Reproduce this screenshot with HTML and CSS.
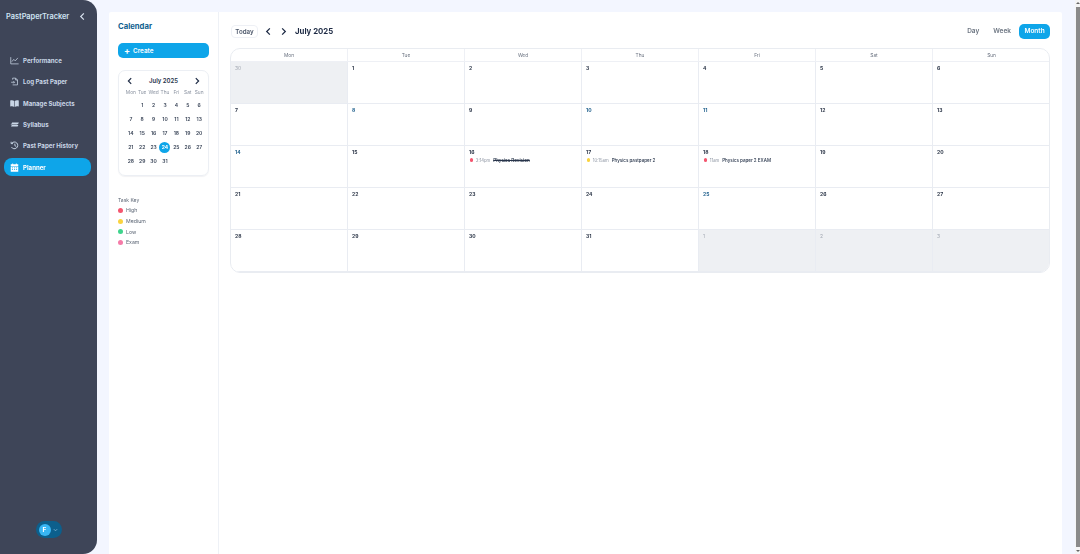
FILE: index.html
```html
<!DOCTYPE html>
<html lang="en">
<head>
<meta charset="utf-8">
<title>PastPaperTracker</title>
<link rel="stylesheet" href="styles.css">
</head>
<body>
<div class="app">
  <aside class="sidebar">
    <div class="brand">
      <span class="brand-name">PastPaperTracker</span>
      <svg class="collapse" viewBox="0 0 10 10"><path d="M6.500 1.500 3 5l3.500 3.500" /></svg>
    </div>
    <nav class="nav">
      <a class="nav-item"><svg class="nav-icon stroke" viewBox="0 0 12 12"><path d="M1 1.500V10.500H11.500M2.500 7.500 5 4.500l2 2L10.500 2.500"/></svg><span>Performance</span></a>
      <a class="nav-item"><svg class="nav-icon stroke" viewBox="0 0 12 12"><path d="M3.500 3.500V1.500H7.500L10 4V10.500H3.500M7.500 1.500V4H10M1.500 7H6M4.500 5.500 6 7 4.500 8.500"/></svg><span>Log Past Paper</span></a>
      <a class="nav-item"><svg class="nav-icon fill" viewBox="0 0 12 12"><path d="M.3 2c2-.6 4-.4 5.300.5V10.500C4.500 9.700 2.500 9.500.3 10ZM11.700 2c-2-.6-4-.4-5.300.5V10.500C7.500 9.700 9.500 9.500 11.700 10Z"/></svg><span>Manage Subjects</span></a>
      <a class="nav-item"><svg class="nav-icon fill" viewBox="0 0 12 12"><path d="M2.800 3.200H11.800L10.800 5.200H1.800ZM.6 6H9.500L11.200 7.200 10 8.800H1.200L2.400 7.200Z"/></svg><span>Syllabus</span></a>
      <a class="nav-item"><svg class="nav-icon stroke thick" viewBox="0 0 12 12"><path d="M2.300 3A4.500 4.500 0 1 1 2 8.200M1.500 1V3.500H4M6.500 3.500V6.200L8.300 7.300"/></svg><span>Past Paper History</span></a>
      <a class="nav-item active"><svg class="nav-icon fill" viewBox="0 0 12 12"><path d="M3 .5H4.200V1.800H7.800V.5H9V1.800H11V4H1V1.800H3ZM1 4.800H11V11.500H1ZM2.500 6V7H4V6ZM5.300 6V7H6.800V6ZM8 6V7H9.500V6ZM2.500 8.300V9.300H4V8.300ZM5.300 8.300V9.300H6.800V8.300ZM8 8.300V9.300H9.500V8.300Z" fill-rule="evenodd"/></svg><span>Planner</span></a>
    </nav>
    <div class="user">
      <div class="user-pill"><span class="avatar">F</span><svg class="user-caret" viewBox="0 0 6 4"><path d="M1 1l2 2 2-2"/></svg></div>
    </div>
  </aside>

  <main class="panel">
    <section class="side">
      <h1 class="side-title">Calendar</h1>
      <button class="create"><span class="plus">+</span>Create</button>
      <div class="mini">
        <div class="mini-head">
          <svg class="chev" viewBox="0 0 10 10"><path d="M6.500 1.500 3 5l3.500 3.500"/></svg>
          <span>July 2025</span>
          <svg class="chev" viewBox="0 0 10 10"><path d="M3.500 1.500 7 5 3.500 8.500"/></svg>
        </div>
        <div class="mini-grid">
          <span class="dow">Mon</span><span class="dow">Tue</span><span class="dow">Wed</span><span class="dow">Thu</span><span class="dow">Fri</span><span class="dow">Sat</span><span class="dow">Sun</span>
          <span></span><span>1</span><span>2</span><span>3</span><span>4</span><span>5</span><span>6</span>
          <span>7</span><span>8</span><span>9</span><span>10</span><span>11</span><span>12</span><span>13</span>
          <span>14</span><span>15</span><span>16</span><span>17</span><span>18</span><span>19</span><span>20</span>
          <span>21</span><span>22</span><span>23</span><span class="today">24</span><span>25</span><span>26</span><span>27</span>
          <span>28</span><span>29</span><span>30</span><span>31</span><span></span><span></span><span></span>
        </div>
      </div>
      <div class="key">
        <div class="key-title">Task Key</div>
        <div class="key-row"><i class="dot high"></i>High</div>
        <div class="key-row"><i class="dot medium"></i>Medium</div>
        <div class="key-row"><i class="dot low"></i>Low</div>
        <div class="key-row"><i class="dot exam"></i>Exam</div>
      </div>
    </section>

    <section class="cal">
      <header class="toolbar">
        <div class="tool-left">
          <button class="today-btn">Today</button>
          <svg class="tool-chev" viewBox="0 0 10 10"><path d="M6.500 1.500 3 5l3.500 3.500"/></svg>
          <svg class="tool-chev" viewBox="0 0 10 10"><path d="M3.500 1.500 7 5 3.500 8.500"/></svg>
          <h2 class="month">July 2025</h2>
        </div>
        <div class="views">
          <button class="view">Day</button>
          <button class="view">Week</button>
          <button class="view on">Month</button>
        </div>
      </header>

      <div class="grid">
        <div class="dh">Mon</div><div class="dh">Tue</div><div class="dh">Wed</div><div class="dh">Thu</div><div class="dh">Fri</div><div class="dh">Sat</div><div class="dh">Sun</div>

        <div class="c off"><b>30</b></div><div class="c"><b>1</b></div><div class="c"><b>2</b></div><div class="c"><b>3</b></div><div class="c"><b>4</b></div><div class="c"><b>5</b></div><div class="c"><b>6</b></div>
        <div class="c"><b>7</b></div><div class="c"><b class="blue">8</b></div><div class="c"><b>9</b></div><div class="c"><b class="blue">10</b></div><div class="c"><b class="blue">11</b></div><div class="c"><b>12</b></div><div class="c"><b>13</b></div>
        <div class="c"><b class="blue">14</b></div><div class="c"><b>15</b></div>
        <div class="c"><b>16</b><div class="ev"><i class="ev-dot high"></i><span class="ev-time">3:14pm</span><span class="ev-name done">Physics Revision</span></div></div>
        <div class="c"><b>17</b><div class="ev"><i class="ev-dot medium"></i><span class="ev-time">10:15am</span><span class="ev-name">Physics pastpaper 2</span></div></div>
        <div class="c"><b>18</b><div class="ev"><i class="ev-dot high"></i><span class="ev-time">11am</span><span class="ev-name">Physics paper 2 EXAM</span></div></div>
        <div class="c"><b>19</b></div><div class="c"><b>20</b></div>
        <div class="c"><b>21</b></div><div class="c"><b>22</b></div><div class="c"><b>23</b></div><div class="c"><b>24</b></div><div class="c"><b class="blue">25</b></div><div class="c"><b>26</b></div><div class="c"><b>27</b></div>
        <div class="c"><b>28</b></div><div class="c"><b>29</b></div><div class="c"><b>30</b></div><div class="c"><b>31</b></div><div class="c off"><b>1</b></div><div class="c off"><b>2</b></div><div class="c off"><b>3</b></div>
      </div>
    </section>
  </main>
</div>
<div class="scrollbar"><span class="arrow up"></span><span class="thumb"></span><span class="arrow down"></span></div>
</body>
</html>
```
FILE: styles.css
```css
* { box-sizing: border-box; }
html, body { margin: 0; height: 100%; overflow: hidden; }
body { background: #f3f6ff; font-family: Inter, "Liberation Sans", sans-serif; color: #1f2a3d; }
button { font-family: inherit; border: 0; padding: 0; background: none; }
svg { display: block; fill: none; stroke: currentColor; }

.app { display: flex; height: 554px; width: 1080px; filter: blur(.3px); }

.sidebar { width: 97px; flex: none; background: #3e4558; border-radius: 0 14px 14px 0; display: flex; flex-direction: column; color: #c9d6e6; }
.brand { height: 33px; padding: 0 10px 0 6px; display: flex; align-items: center; justify-content: space-between; }
.brand-name { font-size: 7.400px; font-weight: 600; color: #cfe3f2; white-space: nowrap; }
.collapse { width: 9px; height: 9px; stroke-width: 1.300; color: #d8e2ee; }
.nav { margin-top: 18.300px; display: flex; flex-direction: column; gap: 3.400px; padding: 0 6px 0 4px; }
.nav-item { height: 18px; display: flex; align-items: center; gap: 4px; padding-left: 6px; border-radius: 8px; font-size: 6.100px; font-weight: 700; white-space: nowrap; }
.nav-item.active { background: #0ea5e9; color: #fff; }
.nav-icon { width: 9px; height: 9px; flex: none; }
.nav-icon.stroke { stroke-width: 1; }
.nav-icon.thick { stroke-width: 1.300; }
.nav-icon.fill { fill: currentColor; stroke: none; }
.user { margin-top: auto; padding-bottom: 16px; display: flex; justify-content: center; }
.user-pill { width: 26px; height: 17px; border-radius: 9px; background: #0c5f8c; display: flex; align-items: center; gap: 2px; padding-left: 3px; }
.avatar { width: 12px; height: 12px; border-radius: 50%; background: #38b6f4; color: #fff; font-size: 6.500px; font-weight: 700; display: flex; align-items: center; justify-content: center; }
.user-caret { width: 5px; height: 4px; color: #7fb6d6; stroke-width: 1; }

.panel { margin: 12px 0 0 12px; width: 953px; flex: none; background: #fff; display: flex; border-radius: 2px 2px 0 0; }

.side { width: 110px; flex: none; border-right: 1px solid #eef1f6; padding: 10px 9px 0 9px; }
.side-title { margin: 0; font-size: 7.700px; font-weight: 700; color: #0f5f8f; line-height: 10px; }
.create { display: flex; align-items: center; gap: 3px; margin-top: 11px; width: 91px; height: 15px; border-radius: 5px; background: #0ea5e9; color: #fff; font-size: 6.300px; font-weight: 600; padding-left: 6px; }
.plus { font-size: 9px; font-weight: 700; line-height: 1; }
.mini { margin-top: 12px; width: 91px; height: 106px; border: 1px solid #eceff4; border-radius: 7px; box-shadow: 0 1px 1px rgba(30,40,60,.06); padding: 3px 0 0; }
.mini-head { display: flex; align-items: center; justify-content: space-between; height: 13px; padding: 0 7px; font-size: 6px; font-weight: 600; color: #27344a; }
.chev { width: 8px; height: 8px; stroke-width: 1.500; color: #1d2a44; }
.mini-grid { display: grid; grid-template-columns: repeat(7, 11.400px); grid-template-rows: 10.500px; grid-auto-rows: 14.200px; justify-content: center; padding-left: 3px; font-size: 5px; font-weight: 600; color: #3a4558; text-align: center; align-items: center; justify-items: center; }
.mini-grid .dow { font-size: 4.800px; font-weight: 400; color: #8a92a0; line-height: 10px; align-self: start; }
.today { width: 11px; height: 11px; border-radius: 50%; background: #0ea5e9; color: #fff; font-weight: 700; display: flex; align-items: center; justify-content: center; }
.key { margin-top: 20px; font-size: 5px; color: #5c6675; }
.key-title { line-height: 8px; margin-bottom: 1px; }
.key-row { display: flex; align-items: center; gap: 3px; height: 10.700px; font-size: 5.200px; }
.dot { width: 5px; height: 5px; border-radius: 50%; flex: none; }
.high { background: #f4566f; }
.medium { background: #fad33f; }
.low { background: #3ed48c; }
.exam { background: #f57ba8; }

.cal { flex: 1; min-width: 0; padding: 0 12px; }
.toolbar { height: 36px; padding-top: 2px; display: flex; align-items: center; justify-content: space-between; }
.tool-left { display: flex; align-items: center; }
.today-btn { width: 27px; height: 13px; border: 1px solid #eef0f5; border-radius: 4px; font-size: 6.200px; font-weight: 600; color: #4a5568; }
.tool-chev { width: 9px; height: 9px; stroke-width: 1.400; color: #1d2a44; margin-left: 6px; }
.tool-chev + .tool-chev { margin-left: 6px; }
.month { margin: 0 0 0 7px; font-size: 7.800px; font-weight: 700; color: #1d2a44; }
.views { display: flex; align-items: center; }
.view { font-size: 6.500px; font-weight: 600; color: #6b7480; padding: 0 7px; height: 15px; border-radius: 5px; }
.view.on { background: #0ea5e9; color: #fff; width: 31px; padding: 0; margin-left: 1px; }

.grid { display: grid; width: 820px; margin-left: -1px; grid-template-columns: repeat(7, 117px); grid-template-rows: 13px repeat(5, 42.100px); border: 1px solid #e9ecf1; border-radius: 10px; overflow: hidden; }
.dh { font-size: 4.800px; color: #6a7280; text-align: center; line-height: 12px; border-right: 1px solid #eef0f5; border-bottom: 1px solid #eef0f5; }
.c { border-right: 1px solid #e9ecf2; border-bottom: 1px solid #e9ecf2; padding: 3px 4px; min-width: 0; }
.dh:nth-child(7n), .c:nth-child(7n) { border-right: 0; }
.c b { display: block; font-size: 5px; font-weight: 700; line-height: 7px; color: #2c3648; }
.c b.blue { color: #1e5f8c; }
.c.off { background: #eef0f3; }
.c.off b { color: #a3a9b3; font-weight: 400; }
.ev { display: flex; align-items: center; height: 8px; padding-left: .5px; white-space: nowrap; }
.ev-dot { width: 3.500px; height: 3.500px; border-radius: 50%; flex: none; margin-right: 2.800px; }
.ev-time { font-size: 4.200px; color: #8a92a0; margin-right: 3px; }
.ev-name { font-size: 4.500px; font-weight: 500; color: #27344a; }
.ev-name.done { text-decoration: line-through; font-weight: 600; }

.scrollbar { position: fixed; top: 0; right: 0; bottom: 0; width: 5px; background: #f5f5f5; display: flex; flex-direction: column; align-items: center; }
.thumb { flex: 1; width: 4px; background: #8a8a8a; margin: 1px 0; }
.arrow { flex: none; width: 0; height: 0; border-left: 2px solid transparent; border-right: 2px solid transparent; margin: 2px 0; }
.arrow.up { border-bottom: 2px solid #666; }
.arrow.down { border-top: 2px solid #666; }
```
